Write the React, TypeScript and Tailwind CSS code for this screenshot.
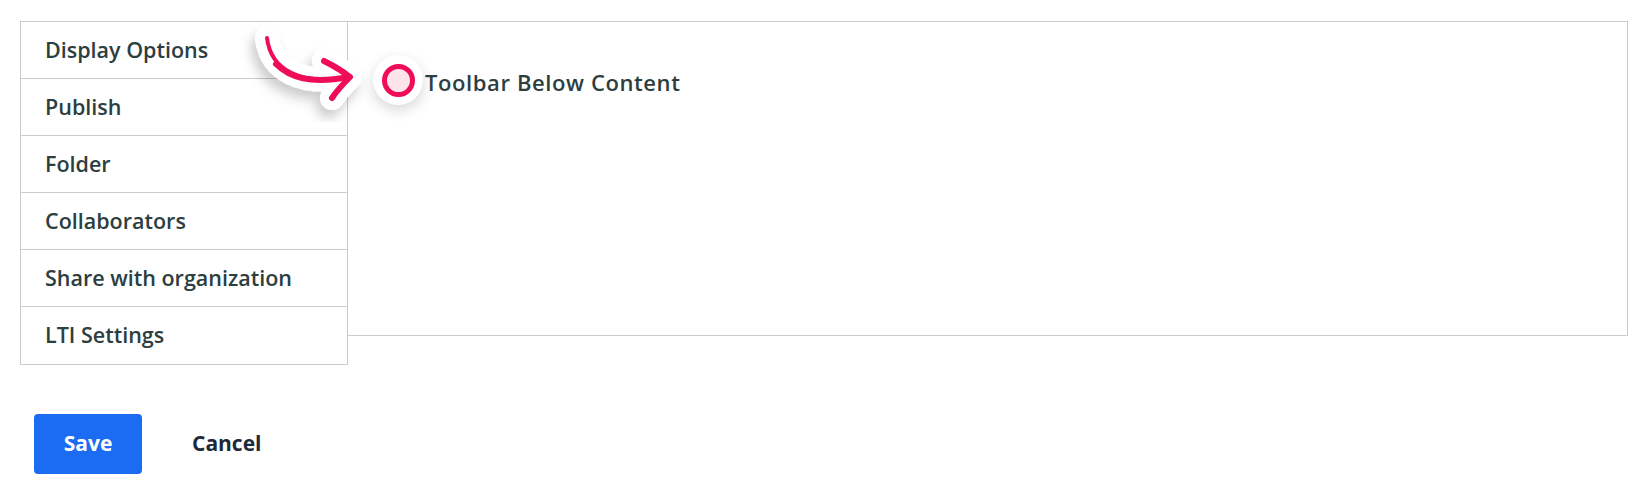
import React from "react";

const tabs = [
  "Display Options",
  "Publish",
  "Folder",
  "Collaborators",
  "Share with organization",
  "LTI Settings",
];

function Arrow() {
  // hand-drawn callout arrow pointing at the radio
  return (
    <svg
      className="absolute left-[230px] top-[15px] w-[150px] h-[110px] pointer-events-none"
      viewBox="230 15 150 110"
    >
      <defs>
        <filter id="soft" x="-40%" y="-40%" width="180%" height="180%">
          <feDropShadow dx="-4" dy="8" stdDeviation="6" floodColor="#000" floodOpacity="0.2" />
        </filter>
      </defs>
      <g
        filter="url(#soft)"
        fill="none"
        stroke="#ffffff"
        strokeWidth="24"
        strokeLinecap="round"
        strokeLinejoin="round"
      >
        <path d="M267 38 C271 70 300 86 349 77" />
        <path d="M324 61 Q340 69 350 77 Q338 89 332 98" />
      </g>
      <g fill="none" stroke="#ee0d56" strokeLinecap="round" strokeLinejoin="round">
        <path d="M267 38 C271 70 300 86 349 77" strokeWidth="4" />
        <path d="M276 64 C290 78 310 84 349 77" strokeWidth="6" />
        <path d="M324 61 Q340 69 350 77 Q338 89 332 98" strokeWidth="6" />
      </g>
    </svg>
  );
}

export default function App() {
  return (
    <div
      className="relative w-[1648px] h-[495px] bg-white px-5 pt-[21px]"
      style={{ fontFamily: '"Open Sans", "Noto Sans", sans-serif' }}
    >
      <div className="flex items-start">
        {/* left tabs */}
        <div className="w-[328px] border border-[#cccccc] flex flex-col">
          {tabs.map((t, i) => (
            <div
              key={t}
              className={`h-[57px] flex items-center pl-6 text-[21.5px] font-semibold text-[#2c3e40] ${
                i < tabs.length - 1 ? "border-b border-[#cccccc]" : ""
              }`}
            >
              {t}
            </div>
          ))}
        </div>

        {/* panel */}
        <div className="flex-1 h-[315px] border-y border-r border-[#cccccc] pl-[25px] pt-[33px]">
          <label className="flex items-center gap-[2px]">
            <span className="w-[50px] h-[50px] rounded-full bg-white shadow-[0_5px_14px_rgba(0,0,0,0.16)] flex items-center justify-center">
              <span className="w-[33px] h-[33px] rounded-full border-[5px] border-[#ee0d56] bg-[#fde4ea]"></span>
            </span>
            <span className="pt-[4px] text-[22px] tracking-[0.6px] font-semibold text-[#2c3e40]">
              Toolbar Below Content
            </span>
          </label>
        </div>
      </div>

      {/* footer buttons */}
      <div className="flex items-center mt-[49px] pl-[14px]">
        <button className="w-[108px] h-[60px] rounded-[4px] bg-[#1b6cf2] text-white text-[21px] font-bold">
          Save
        </button>
        <button className="ml-[50px] text-[21px] font-bold text-[#1d2a3b]">Cancel</button>
      </div>

      <Arrow />
    </div>
  );
}
